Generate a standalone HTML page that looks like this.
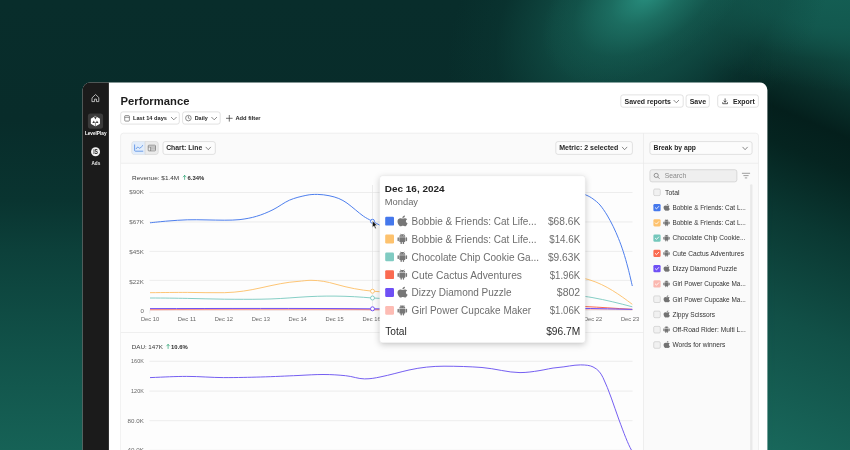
<!DOCTYPE html>
<html lang="en">
<head>
<meta charset="utf-8">
<title>Performance</title>
<style>
*{box-sizing:border-box;margin:0;padding:0}
html,body{width:850px;height:450px;overflow:hidden}
body{font-family:"Liberation Sans",sans-serif;color:#1f1f1f;position:relative;
background:#072a28;}
.a{position:absolute}
#bg{position:absolute;left:0;top:0;width:850px;height:450px;overflow:hidden}
svg text{font-family:"Liberation Sans",sans-serif;white-space:pre}
.ov{position:absolute;left:0;top:0;will-change:transform}
</style>
</head>
<body>
<div id="bg">
<div class="a" style="left:0;top:0;width:850px;height:450px;background:linear-gradient(to bottom,rgb(8,45,43) 0px,rgb(8,44,42) 120px,rgb(9,52,48) 200px,rgb(12,64,58) 250px,rgb(17,82,73) 350px,rgb(22,98,86) 450px)"></div>
<div class="a" style="left:700px;top:0;width:150px;height:450px;-webkit-mask-image:linear-gradient(to right,transparent 0%,#000 50%);mask-image:linear-gradient(to right,transparent 0%,#000 50%);background:linear-gradient(203deg,rgb(18,85,76) 0px,rgb(17,80,71) 40px,rgb(10,50,45) 88px,rgb(4,31,28) 128px,rgb(5,36,32) 160px,rgb(10,56,50) 225px,rgb(17,80,71) 320px,rgb(26,108,95) 470px)"></div>
<div class="a" style="left:600px;top:-120px;width:460px;height:210px;transform:rotate(6deg);background:radial-gradient(ellipse closest-side at 50% 50%,rgba(20,95,84,1) 0%,rgba(19,90,80,.85) 40%,rgba(14,70,62,.4) 72%,rgba(12,60,54,0) 100%)"></div>
<div class="a" style="left:430px;top:-140px;width:420px;height:300px;transform:rotate(-35deg);background:radial-gradient(ellipse closest-side at 50% 50%,rgba(20,90,80,.9) 0%,rgba(18,82,73,.7) 45%,rgba(12,62,56,.3) 75%,rgba(10,60,54,0) 100%)"></div>
<div class="a" style="left:528px;top:-76px;width:240px;height:140px;transform:rotate(-35deg);background:radial-gradient(ellipse closest-side at 50% 50%,rgba(40,142,126,1) 0%,rgba(32,120,106,.7) 35%,rgba(24,100,88,.3) 70%,rgba(20,88,78,0) 100%)"></div>
</div>
<svg class="ov" width="850" height="450" viewBox="0 0 850 450" fill="none">
<path d="M82.500 450V90.100a7.600 7.600 0 0 1 7.600-7.600H759.800a7.600 7.600 0 0 1 7.600 7.600V450z" fill="#fff"/>
<path d="M82.500 450V90.100a7.600 7.600 0 0 1 7.600-7.600H108.900V450z" fill="#1b1b1b"/>
<rect x="87.9" y="113.5" width="15.2" height="15.2" rx="2.6" fill="#3b3b3b"/>
<path d="M92.300 97.600 95.550 94.500l3.250 3.100v4h-2.300v-2.500h-1.900v2.500h-2.300z" fill="none" stroke="#e4e4e4" stroke-width="0.75" stroke-linejoin="round" stroke-linecap="round"/>
<path d="M95.40 116.65 99.34 118.92 99.34 123.48 95.40 125.75 91.46 123.48 91.46 118.92z" fill="#fff" stroke="#fff" stroke-width="1.2" stroke-linejoin="round"/>
<path d="M93.7 116.2L95.4 119.5L97.10000000000001 116.2z" fill="#3b3b3b"/>
<path d="M94.5 116.0L95.05000000000001 117.3v-1.500zM96.30000000000001 116.0L95.75 117.3v-1.500z" fill="#fff"/>
<path d="M95.4 122.0v4.400" fill="none" stroke="#3b3b3b" stroke-width="0.6"/>
<path d="M92.30000000000001 123.10000000000001l1.600-2.500 1 2.300zM98.5 123.10000000000001l-1.600-2.500-1 2.300z" fill="#3b3b3b"/>
<text x="95.7" y="135" font-size="5.3" fill="#fff" font-weight="bold" text-anchor="middle" textLength="21.6" lengthAdjust="spacingAndGlyphs">LevelPlay</text>
<circle cx="95.550" cy="151.700" r="4.500" fill="#f2f2f2"/>
<text x="95.6" y="154" font-size="6.6" fill="#1b1b1b" font-weight="bold" text-anchor="middle" textLength="4.8" lengthAdjust="spacingAndGlyphs">iS</text>
<text x="95.9" y="164.9" font-size="5.3" fill="#eee" font-weight="bold" text-anchor="middle" textLength="8.8" lengthAdjust="spacingAndGlyphs">Ads</text>
<text x="120.6" y="105" font-size="11.8" fill="#1c1c1c" font-weight="bold" textLength="68.8" lengthAdjust="spacingAndGlyphs">Performance</text>
<rect x="620.80" y="94.90" width="62.40" height="12.30" rx="2.20" fill="#fff" stroke="#cfcfcf" stroke-width="0.6"/>
<rect x="686.10" y="94.90" width="23.20" height="12.30" rx="2.20" fill="#fff" stroke="#cfcfcf" stroke-width="0.6"/>
<rect x="717.70" y="94.90" width="40.70" height="12.30" rx="2.20" fill="#fff" stroke="#cfcfcf" stroke-width="0.6"/>
<text x="624.6" y="103.6" font-size="7" fill="#262626" font-weight="bold" textLength="46.3" lengthAdjust="spacingAndGlyphs">Saved reports</text>
<path d="M673.9 100.3l2.4 2.5 2.4 -2.5" fill="none" stroke="#4a4a4a" stroke-width="0.65" stroke-linecap="round" stroke-linejoin="round"/>
<text x="689.7" y="103.6" font-size="7" fill="#262626" font-weight="bold" textLength="16.4" lengthAdjust="spacingAndGlyphs">Save</text>
<path d="M725.100 98.800v3.300M723.800 100.900l1.300 1.300 1.300-1.300M722.700 102.600v1.100h4.800v-1.100" fill="none" stroke="#2a2a2a" stroke-width="0.75" stroke-linecap="round" stroke-linejoin="round"/>
<text x="732.9" y="103.6" font-size="7" fill="#262626" font-weight="bold" textLength="21.8" lengthAdjust="spacingAndGlyphs">Export</text>
<rect x="120.70" y="111.90" width="58.60" height="12.20" rx="2.20" fill="#fff" stroke="#cfcfcf" stroke-width="0.6"/>
<rect x="182.60" y="111.90" width="37.60" height="12.20" rx="2.20" fill="#fff" stroke="#cfcfcf" stroke-width="0.6"/>
<rect x="124.700" y="115.600" width="4.700" height="5.500" rx=".8" stroke="#4a4a4a" stroke-width=".6"/>
<path d="M124.700 117.300h4.700" fill="none" stroke="#4a4a4a" stroke-width="0.6"/>
<text x="133" y="120.3" font-size="6" fill="#262626" font-weight="bold" textLength="34" lengthAdjust="spacingAndGlyphs">Last 14 days</text>
<path d="M171.3 117.3l2.5 2.5 2.5 -2.5" fill="none" stroke="#4a4a4a" stroke-width="0.65" stroke-linecap="round" stroke-linejoin="round"/>
<circle cx="188.400" cy="118.100" r="2.800" stroke="#444" stroke-width=".6"/>
<path d="M188.400 116.500v1.700l1.100.6" fill="none" stroke="#444" stroke-width="0.6" stroke-linecap="round"/>
<text x="194.7" y="120.3" font-size="6" fill="#262626" font-weight="bold" textLength="13" lengthAdjust="spacingAndGlyphs">Daily</text>
<path d="M211.7 117.3l2.5 2.5 2.5 -2.5" fill="none" stroke="#4a4a4a" stroke-width="0.65" stroke-linecap="round" stroke-linejoin="round"/>
<path d="M229.300 115.400v5.800M226.400 118.300h5.800" fill="none" stroke="#333" stroke-width="0.7" stroke-linecap="round"/>
<text x="235.4" y="120.3" font-size="6" fill="#262626" font-weight="bold" textLength="25.2" lengthAdjust="spacingAndGlyphs">Add filter</text>
<rect x="120.60" y="133.20" width="637.90" height="339.40" rx="2.70" fill="#fafafa" stroke="#e6e6e6" stroke-width="0.6"/>
<rect x="120.9" y="163.2" width="522.4" height="300" rx="0" fill="#fdfdfd"/>
<rect x="120.9" y="162.8" width="637.3" height="0.7" rx="0" fill="#e8e8e8"/>
<rect x="643.2" y="133.4" width="0.7" height="320" rx="0" fill="#e8e8e8"/>
<rect x="120.9" y="332.2" width="522.4" height="0.7" rx="0" fill="#e8e8e8"/>
<rect x="131.90" y="141.60" width="26.30" height="12.80" rx="2.20" fill="#ececec" stroke="#d0d0d0" stroke-width="0.6"/>
<path d="M145 141.600h-10.600a2.200 2.200 0 0 0-2.200 2.200v8.400a2.200 2.200 0 0 0 2.200 2.200H145z" fill="#e2edfb"/>
<path d="M145 141.600v12.800" fill="none" stroke="#d0d0d0" stroke-width="0.6"/>
<path d="M134.600 144.900v5.400a.9.9 0 0 0 .9.9h7.300" fill="none" stroke="#3b7be0" stroke-width="0.7" stroke-linecap="round" stroke-linejoin="round"/>
<path d="M136.200 148.700c.8-1.500 1.500-2 2.200-1.300s1.300 1.200 2 .5 1.400-1.600 2.300-2.400" fill="none" stroke="#3b7be0" stroke-width="0.7" stroke-linecap="round" stroke-linejoin="round"/>
<rect x="148.200" y="145.200" width="7.300" height="5.700" rx=".7" stroke="#6a6a6a" stroke-width=".65"/>
<path d="M148.200 147h7.300M150.600 147v3.900M150.600 148.950h4.900" fill="none" stroke="#6a6a6a" stroke-width="0.6"/>
<rect x="163.00" y="141.60" width="52.30" height="12.80" rx="2.20" fill="#fcfcfc" stroke="#cfcfcf" stroke-width="0.6"/>
<text x="166.2" y="150.4" font-size="7" fill="#262626" font-weight="bold" textLength="36" lengthAdjust="spacingAndGlyphs">Chart: Line</text>
<path d="M206 147.2l2.3 2.5 2.3 -2.5" fill="none" stroke="#4a4a4a" stroke-width="0.65" stroke-linecap="round" stroke-linejoin="round"/>
<rect x="555.80" y="141.60" width="76.60" height="12.80" rx="2.20" fill="#fcfcfc" stroke="#cfcfcf" stroke-width="0.6"/>
<text x="559.2" y="150.4" font-size="7" fill="#262626" font-weight="bold" textLength="59" lengthAdjust="spacingAndGlyphs">Metric: 2 selected</text>
<path d="M622.3 147.2l2.3 2.5 2.3 -2.5" fill="none" stroke="#4a4a4a" stroke-width="0.65" stroke-linecap="round" stroke-linejoin="round"/>
<rect x="649.90" y="141.60" width="102.20" height="12.80" rx="2.20" fill="#fcfcfc" stroke="#cfcfcf" stroke-width="0.6"/>
<text x="653.6" y="150.4" font-size="7" fill="#262626" font-weight="bold" textLength="42.4" lengthAdjust="spacingAndGlyphs">Break by app</text>
<path d="M742.8 147.2l2.3 2.5 2.3 -2.5" fill="none" stroke="#4a4a4a" stroke-width="0.65" stroke-linecap="round" stroke-linejoin="round"/>
<text x="132" y="179.7" font-size="6.2" fill="#3a3a3a" textLength="47.2" lengthAdjust="spacingAndGlyphs">Revenue: $1.4M</text>
<path d="M184.6 179.5v-4.100M183.2 176.9l1.400-1.500 1.400 1.500" fill="none" stroke="#1f9d6b" stroke-width="0.65" stroke-linecap="round" stroke-linejoin="round"/>
<text x="187.6" y="179.7" font-size="6.2" fill="#2a2a2a" font-weight="bold" textLength="16.7" lengthAdjust="spacingAndGlyphs">6.34%</text>
<path d="M149.500 192.5H632.5" fill="none" stroke="#e9e9e9" stroke-width="0.8"/>
<path d="M149.500 221.9H632.5" fill="none" stroke="#e9e9e9" stroke-width="0.8"/>
<path d="M149.500 251.4H632.5" fill="none" stroke="#e9e9e9" stroke-width="0.8"/>
<path d="M149.500 280.4H632.5" fill="none" stroke="#e9e9e9" stroke-width="0.8"/>
<path d="M149.500 310.2H632.5" fill="none" stroke="#e9e9e9" stroke-width="0.8"/>
<path d="M149.800 310.500v3" fill="none" stroke="#e0e0e0" stroke-width="0.6"/>
<path d="M372.5 185V311" fill="none" stroke="#e2e2e2" stroke-width="0.7"/>
<path d="M150 222.8C153.0 222.5 161.8 221.5 168 221C174.2 220.5 181.0 220.0 187.3 219.8C193.6 219.6 199.8 219.8 206 219.9C212.2 220.0 218.6 220.2 224.3 220.2C230.0 220.1 234.6 220.2 240 219.6C245.4 218.9 251.0 218.0 256.5 216.3C262.0 214.7 267.5 212.4 273 209.7C278.5 207.0 283.9 202.6 289.4 200.2C294.9 197.8 301.2 196.4 305.9 195.4C310.6 194.4 313.5 194.4 317.4 194.4C321.2 194.4 325.4 195.0 329 195.7C332.6 196.4 335.8 197.3 338.8 198.5C341.8 199.7 344.2 201.2 347 203.1C349.8 205.0 352.5 207.5 355.3 209.7C358.1 211.9 360.7 214.4 363.6 216.3C366.5 218.2 368.1 219.0 372.5 221.3C376.9 223.6 383.9 227.6 390 230C396.1 232.4 402.7 236.0 409.4 236C416.1 236.0 423.9 233.0 430 230C436.1 227.0 440.5 221.8 446.3 218C452.1 214.2 458.9 209.5 465 207C471.1 204.5 476.9 203.2 483.2 203C489.5 202.8 496.9 205.3 503 205.5C509.1 205.7 513.8 205.8 520 204C526.2 202.2 533.3 197.4 540 195C546.7 192.6 554.3 190.3 560 189.5C565.7 188.7 569.7 189.4 574 190.3C578.3 191.2 582.8 193.6 586 195C589.2 196.4 590.7 197.2 593 198.9C595.3 200.6 597.7 202.3 600 205C602.3 207.7 604.8 211.4 607 215C609.2 218.6 611.4 222.8 613.3 226.7C615.2 230.6 616.8 234.3 618.5 238.5C620.2 242.7 621.7 246.8 623.3 251.7C624.9 256.6 626.5 262.3 628 268C629.5 273.7 631.6 283.0 632.3 286" fill="none" stroke="#4578ec" stroke-width="0.95"/>
<path d="M150 292.700C165 292.500 175 292.400 187.300 292.400C200 292.400 212 293 224.300 292.700C238 292.300 249 290.500 261 287.800C275 284.700 286 282.200 298 281.400C303 281 307 280.300 311 280.300C320 280.300 328 282 335 284C349 288 360 290 372.500 291.200C400 293.500 430 293 460 291C500 288 530 276 560 276C572 276.500 582 277.500 590 280C606 285 620 295 632.300 304.300" fill="none" stroke="#fdc26e" stroke-width="0.95"/>
<path d="M150 298C165 298 175 298.200 187.300 298.400C200 298.600 212 299.100 224.300 299.200C238 299.300 249 299.400 261 299.200C275 299 286 298.200 298 297.300C312 296.300 323 296 335 296.100C349 296.200 360 297 372.500 298C420 301 500 295 560 294.500C575 295 583 296 592 297.500C606 300 620 303.500 632.300 306.800" fill="none" stroke="#80cbc2" stroke-width="0.95"/>
<path d="M150 309.600C220 309.400 300 308.800 372.500 309.600C440 309.400 520 306.500 560 306C575 306.200 580 306.400 586 306.600C600 307.200 615 308.400 632.300 309.300" fill="none" stroke="#fb6b51" stroke-width="1"/>
<path d="M150 309.900C220 309.800 300 309.600 372.500 309.900C440 309.800 520 309.500 560 309.600C590 309.500 610 309.600 632.300 309.700" fill="none" stroke="#fbb8b0" stroke-width="0.8"/>
<path d="M150 308.600C220 308.500 300 308.200 372.500 308.800C440 309 520 309 560 308.200C590 308.300 610 308.900 632.300 309.400" fill="none" stroke="#6f50f5" stroke-width="1"/>
<circle cx="372.500" cy="221.3" r="2" fill="#fff" stroke="#4578ec" stroke-width=".95"/>
<circle cx="372.500" cy="291.2" r="2" fill="#fff" stroke="#fdc26e" stroke-width=".95"/>
<circle cx="372.500" cy="298" r="2" fill="#fff" stroke="#80cbc2" stroke-width=".95"/>
<circle cx="372.500" cy="308.8" r="2" fill="#fff" stroke="#6f50f5" stroke-width=".95"/>
<text x="143.9" y="193.7" font-size="6.1" fill="#666" text-anchor="end" textLength="14.6" lengthAdjust="spacingAndGlyphs">$90K</text>
<text x="143.9" y="223.7" font-size="6.1" fill="#666" text-anchor="end" textLength="14.6" lengthAdjust="spacingAndGlyphs">$67K</text>
<text x="143.9" y="253.5" font-size="6.1" fill="#666" text-anchor="end" textLength="14.6" lengthAdjust="spacingAndGlyphs">$45K</text>
<text x="143.9" y="283.5" font-size="6.1" fill="#666" text-anchor="end" textLength="14.6" lengthAdjust="spacingAndGlyphs">$22K</text>
<text x="143.9" y="313.4" font-size="6.1" fill="#666" text-anchor="end">0</text>
<text x="150.0" y="320.9" font-size="5.9" fill="#666" text-anchor="middle" textLength="18.2" lengthAdjust="spacingAndGlyphs">Dec 10</text>
<text x="186.9" y="320.9" font-size="5.9" fill="#666" text-anchor="middle" textLength="18.2" lengthAdjust="spacingAndGlyphs">Dec 11</text>
<text x="223.8" y="320.9" font-size="5.9" fill="#666" text-anchor="middle" textLength="18.2" lengthAdjust="spacingAndGlyphs">Dec 12</text>
<text x="260.8" y="320.9" font-size="5.9" fill="#666" text-anchor="middle" textLength="18.2" lengthAdjust="spacingAndGlyphs">Dec 13</text>
<text x="297.7" y="320.9" font-size="5.9" fill="#666" text-anchor="middle" textLength="18.2" lengthAdjust="spacingAndGlyphs">Dec 14</text>
<text x="334.6" y="320.9" font-size="5.9" fill="#666" text-anchor="middle" textLength="18.2" lengthAdjust="spacingAndGlyphs">Dec 15</text>
<text x="371.5" y="320.9" font-size="5.9" fill="#666" text-anchor="middle" textLength="18.2" lengthAdjust="spacingAndGlyphs">Dec 16</text>
<text x="408.4" y="320.9" font-size="5.9" fill="#666" text-anchor="middle" textLength="18.2" lengthAdjust="spacingAndGlyphs">Dec 17</text>
<text x="445.4" y="320.9" font-size="5.9" fill="#666" text-anchor="middle" textLength="18.2" lengthAdjust="spacingAndGlyphs">Dec 18</text>
<text x="482.3" y="320.9" font-size="5.9" fill="#666" text-anchor="middle" textLength="18.2" lengthAdjust="spacingAndGlyphs">Dec 19</text>
<text x="519.2" y="320.9" font-size="5.9" fill="#666" text-anchor="middle" textLength="18.2" lengthAdjust="spacingAndGlyphs">Dec 20</text>
<text x="556.1" y="320.9" font-size="5.9" fill="#666" text-anchor="middle" textLength="18.2" lengthAdjust="spacingAndGlyphs">Dec 21</text>
<text x="593.0" y="320.9" font-size="5.9" fill="#666" text-anchor="middle" textLength="18.2" lengthAdjust="spacingAndGlyphs">Dec 22</text>
<text x="630.0" y="320.9" font-size="5.9" fill="#666" text-anchor="middle" textLength="18.2" lengthAdjust="spacingAndGlyphs">Dec 23</text>
<text x="131.7" y="348.7" font-size="6.2" fill="#3a3a3a" textLength="31.3" lengthAdjust="spacingAndGlyphs">DAU: 147K</text>
<path d="M168.1 348.5v-4.100M166.7 345.9l1.400-1.500 1.400 1.500" fill="none" stroke="#1f9d6b" stroke-width="0.65" stroke-linecap="round" stroke-linejoin="round"/>
<text x="171.1" y="348.7" font-size="6.2" fill="#2a2a2a" font-weight="bold" textLength="16.7" lengthAdjust="spacingAndGlyphs">10.6%</text>
<path d="M149.500 361.3H632.5" fill="none" stroke="#e9e9e9" stroke-width="0.8"/>
<path d="M149.500 391.1H632.5" fill="none" stroke="#e9e9e9" stroke-width="0.8"/>
<path d="M149.500 420.7H632.5" fill="none" stroke="#e9e9e9" stroke-width="0.8"/>
<path d="M149.500 450.3H632.5" fill="none" stroke="#e9e9e9" stroke-width="0.8"/>
<path d="M150 377.600C165 377 175 376.400 186.700 376.400C200 376.400 212 377.600 223.600 377.600C238 377.600 249 377.300 260.400 377C275 376.600 286 376 298 375.500C308 375 315 374.500 323 374.500C332 374.500 338 375 345.500 375.700C353 376.400 358 378.900 364.600 378.900C371 378.900 375 378 380 377C390 375 400 372 409 370C421 367.400 432 366.200 444 366.200C457 366.200 470 366.600 482 367.500C495 368.500 508 372.600 520 372.600C527 372.600 533 371.600 539 370.700C546 369.600 551 368 558 367.500C566 366.900 573 364.900 580.600 364.900C586 364.900 590 365.400 593 366.900C598 369.400 600.500 372.500 603 377.600C609 390 614 406 618.700 419C624 433.500 628 444 631.400 450" fill="none" stroke="#6e56f0" stroke-width="0.95"/>
<text x="143.8" y="363.40000000000003" font-size="5.9" fill="#666" text-anchor="end" textLength="12.7" lengthAdjust="spacingAndGlyphs">160K</text>
<text x="143.8" y="393.20000000000005" font-size="5.9" fill="#666" text-anchor="end" textLength="12.7" lengthAdjust="spacingAndGlyphs">120K</text>
<text x="143.8" y="422.8" font-size="5.9" fill="#666" text-anchor="end" textLength="16.2" lengthAdjust="spacingAndGlyphs">80.0K</text>
<text x="143.8" y="452.40000000000003" font-size="5.9" fill="#666" text-anchor="end" textLength="16.2" lengthAdjust="spacingAndGlyphs">40.0K</text>
<rect x="649.90" y="169.70" width="87.00" height="12.20" rx="2.20" fill="#efefef" stroke="#c6c6c6" stroke-width="0.6"/>
<rect x="750.1" y="184.3" width="2.4" height="270" rx="1.2" fill="#e9e9e9"/>
<circle cx="656.200" cy="175.400" r="2.100" stroke="#666" stroke-width=".65"/>
<path d="M657.800 177l1.500 1.500" fill="none" stroke="#666" stroke-width="0.65" stroke-linecap="round"/>
<text x="664.8" y="178.2" font-size="6.8" fill="#8a8a8a" textLength="21.5" lengthAdjust="spacingAndGlyphs">Search</text>
<path d="M742.300 173.300h7.400M743.800 175.600h4.400M745.200 177.900h1.600" fill="none" stroke="#777" stroke-width="0.7" stroke-linecap="round"/>
<rect x="653.700" y="189.0" width="6.600" height="6.600" rx="1.200" fill="#f1f1f1" stroke="#c4c4c4" stroke-width=".6"/>
<text x="665" y="194.60000000000002" font-size="6.8" fill="#333" textLength="14.5" lengthAdjust="spacingAndGlyphs">Total</text>
<rect x="653.400" y="204.0" width="7.200" height="7.200" rx="1.300" fill="#4578ec"/>
<path d="M655.300 207.7l1.200 1.200 2.200-2.400" fill="none" stroke="#fff" stroke-width="0.85" stroke-linecap="round" stroke-linejoin="round"/>
<path d="M11.2 8.5c0-1.7 1.4-2.5 1.5-2.6-.8-1.2-2.1-1.3-2.5-1.4-1.1-.1-2.1.6-2.6.6s-1.4-.6-2.3-.6c-1.200 0-2.300.7-2.900 1.800-1.200 2.100-.3 5.300.9 7 .6.800 1.300 1.800 2.200 1.700.9 0 1.200-.6 2.300-.6s1.400.6 2.300.5c1 0 1.600-.8 2.100-1.700.7-1 .9-1.900 1-2-.1 0-1.900-.7-2-2.700zM9.500 3.300c.5-.6.800-1.400.7-2.300-.7 0-1.600.5-2.100 1.100-.5.500-.900 1.400-.8 2.200.8.100 1.700-.4 2.200-1z" fill="#737373" transform="translate(662.55 203.15) scale(0.5631 0.5035)"/>
<text x="672.4" y="209.9" font-size="6.8" fill="#333" textLength="73.4" lengthAdjust="spacingAndGlyphs">Bobbie &amp; Friends: Cat L...</text>
<rect x="653.400" y="219.2" width="7.200" height="7.200" rx="1.300" fill="#fdc26e"/>
<path d="M655.300 222.9l1.200 1.200 2.200-2.400" fill="none" stroke="#fff" stroke-width="0.85" stroke-linecap="round" stroke-linejoin="round"/>
<path d="M3.800 5.800h8.400v6.400c0 .5-.4.900-.9.900h-.7v2c0 .6-.5 1-1 1s-1-.4-1-1v-2H7.400v2c0 .6-.5 1-1 1s-1-.4-1-1v-2h-.7c-.5 0-.9-.4-.9-.9zM2.200 5.700c.6 0 1 .4 1 1v4c0 .6-.4 1-1 1s-1-.4-1-1v-4c0-.6.400-1 1-1zm11.600 0c.6 0 1 .4 1 1v4c0 .6-.4 1-1 1s-1-.4-1-1v-4c0-.6.400-1 1-1zM10.400 1.600l.8-1.200c.1-.1 0-.2-.1-.3-.1 0-.2 0-.3.100l-.8 1.200C9.400 1.200 8.700 1 8 1s-1.400.2-2 .4L5.200.2C5.100.1 5 .1 4.900.1c-.100.100-.200.200-.100.300l.8 1.200C4.500 2.300 3.800 3.600 3.800 5h8.400c0-1.400-.7-2.700-1.800-3.400zM6.200 3.700c-.3 0-.500-.2-.500-.5s.2-.5.500-.5.500.2.500.5-.2.500-.5.500zm3.600 0c-.3 0-.500-.2-.500-.5s.2-.5.500-.5.500.2.500.5-.2.500-.5.500z" fill="#737373" transform="translate(662.74 219.26) scale(0.4706 0.4277)"/>
<text x="672.4" y="225.10000000000002" font-size="6.8" fill="#333" textLength="73.4" lengthAdjust="spacingAndGlyphs">Bobbie &amp; Friends: Cat L...</text>
<rect x="653.400" y="234.5" width="7.200" height="7.200" rx="1.300" fill="#74c7bb"/>
<path d="M655.300 238.2l1.200 1.200 2.200-2.400" fill="none" stroke="#fff" stroke-width="0.85" stroke-linecap="round" stroke-linejoin="round"/>
<path d="M3.800 5.800h8.400v6.400c0 .5-.4.900-.9.900h-.7v2c0 .6-.5 1-1 1s-1-.4-1-1v-2H7.400v2c0 .6-.5 1-1 1s-1-.4-1-1v-2h-.7c-.5 0-.9-.4-.9-.9zM2.200 5.700c.6 0 1 .4 1 1v4c0 .6-.4 1-1 1s-1-.4-1-1v-4c0-.6.400-1 1-1zm11.600 0c.6 0 1 .4 1 1v4c0 .6-.4 1-1 1s-1-.4-1-1v-4c0-.6.400-1 1-1zM10.400 1.600l.8-1.200c.1-.1 0-.2-.1-.3-.1 0-.2 0-.3.100l-.8 1.200C9.400 1.200 8.700 1 8 1s-1.400.2-2 .4L5.200.2C5.100.1 5 .1 4.900.1c-.100.100-.200.200-.100.300l.8 1.200C4.500 2.300 3.800 3.600 3.800 5h8.400c0-1.400-.7-2.700-1.800-3.400zM6.200 3.700c-.3 0-.500-.2-.500-.5s.2-.5.500-.5.500.2.500.5-.2.500-.5.500zm3.600 0c-.3 0-.500-.2-.500-.5s.2-.5.500-.5.500.2.500.5-.2.500-.5.500z" fill="#737373" transform="translate(662.74 234.56) scale(0.4706 0.4277)"/>
<text x="672.4" y="240.4" font-size="6.8" fill="#333" textLength="73" lengthAdjust="spacingAndGlyphs">Chocolate Chip Cookie...</text>
<rect x="653.400" y="249.8" width="7.200" height="7.200" rx="1.300" fill="#fb6b51"/>
<path d="M655.300 253.5l1.200 1.200 2.200-2.400" fill="none" stroke="#fff" stroke-width="0.85" stroke-linecap="round" stroke-linejoin="round"/>
<path d="M3.800 5.800h8.400v6.400c0 .5-.4.900-.9.900h-.7v2c0 .6-.5 1-1 1s-1-.4-1-1v-2H7.400v2c0 .6-.5 1-1 1s-1-.4-1-1v-2h-.7c-.5 0-.9-.4-.9-.9zM2.200 5.700c.6 0 1 .4 1 1v4c0 .6-.4 1-1 1s-1-.4-1-1v-4c0-.6.400-1 1-1zm11.600 0c.6 0 1 .4 1 1v4c0 .6-.4 1-1 1s-1-.4-1-1v-4c0-.6.400-1 1-1zM10.400 1.600l.8-1.200c.1-.1 0-.2-.1-.3-.1 0-.2 0-.3.100l-.8 1.200C9.400 1.200 8.700 1 8 1s-1.400.2-2 .4L5.200.2C5.100.1 5 .1 4.900.1c-.100.100-.200.200-.100.300l.8 1.200C4.500 2.300 3.800 3.600 3.800 5h8.400c0-1.400-.7-2.700-1.800-3.400zM6.200 3.700c-.3 0-.500-.2-.500-.5s.2-.5.500-.5.500.2.500.5-.2.500-.5.500zm3.600 0c-.3 0-.500-.2-.500-.5s.2-.5.500-.5.500.2.500.5-.2.500-.5.500z" fill="#737373" transform="translate(662.74 249.86) scale(0.4706 0.4277)"/>
<text x="672.4" y="255.70000000000002" font-size="6.8" fill="#333" textLength="71.6" lengthAdjust="spacingAndGlyphs">Cute Cactus Adventures</text>
<rect x="653.400" y="265.0" width="7.200" height="7.200" rx="1.300" fill="#6f50f5"/>
<path d="M655.300 268.7l1.200 1.200 2.200-2.400" fill="none" stroke="#fff" stroke-width="0.85" stroke-linecap="round" stroke-linejoin="round"/>
<path d="M11.2 8.5c0-1.7 1.4-2.5 1.5-2.6-.8-1.2-2.1-1.3-2.5-1.4-1.1-.1-2.1.6-2.6.6s-1.4-.6-2.3-.6c-1.200 0-2.300.7-2.900 1.800-1.200 2.100-.3 5.300.9 7 .6.800 1.300 1.800 2.200 1.700.9 0 1.200-.6 2.300-.6s1.400.6 2.300.5c1 0 1.600-.8 2.100-1.700.7-1 .9-1.900 1-2-.1 0-1.900-.7-2-2.700zM9.500 3.300c.5-.6.800-1.400.7-2.300-.7 0-1.600.5-2.100 1.100-.5.500-.900 1.400-.8 2.200.8.100 1.700-.4 2.200-1z" fill="#737373" transform="translate(662.55 264.15) scale(0.5631 0.5035)"/>
<text x="672.4" y="270.90000000000003" font-size="6.8" fill="#333" textLength="64.6" lengthAdjust="spacingAndGlyphs">Dizzy Diamond Puzzle</text>
<rect x="653.400" y="280.3" width="7.200" height="7.200" rx="1.300" fill="#fbb8b0"/>
<path d="M655.300 284.0l1.200 1.200 2.200-2.400" fill="none" stroke="#fff" stroke-width="0.85" stroke-linecap="round" stroke-linejoin="round"/>
<path d="M3.800 5.800h8.400v6.400c0 .5-.4.900-.9.900h-.7v2c0 .6-.5 1-1 1s-1-.4-1-1v-2H7.400v2c0 .6-.5 1-1 1s-1-.4-1-1v-2h-.7c-.5 0-.9-.4-.9-.9zM2.200 5.700c.6 0 1 .4 1 1v4c0 .6-.4 1-1 1s-1-.4-1-1v-4c0-.6.400-1 1-1zm11.600 0c.6 0 1 .4 1 1v4c0 .6-.4 1-1 1s-1-.4-1-1v-4c0-.6.400-1 1-1zM10.400 1.600l.8-1.200c.1-.1 0-.2-.1-.3-.1 0-.2 0-.3.100l-.8 1.200C9.400 1.200 8.700 1 8 1s-1.400.2-2 .4L5.200.2C5.100.1 5 .1 4.900.1c-.100.100-.200.200-.100.300l.8 1.200C4.500 2.300 3.800 3.600 3.800 5h8.400c0-1.400-.7-2.700-1.800-3.400zM6.200 3.700c-.3 0-.500-.2-.500-.5s.2-.5.500-.5.500.2.500.5-.2.500-.5.500zm3.600 0c-.3 0-.500-.2-.500-.5s.2-.5.500-.5.500.2.500.5-.2.500-.5.500z" fill="#737373" transform="translate(662.74 280.36) scale(0.4706 0.4277)"/>
<text x="672.4" y="286.2" font-size="6.8" fill="#333" textLength="73.4" lengthAdjust="spacingAndGlyphs">Girl Power Cupcake Ma...</text>
<rect x="653.700" y="295.9" width="6.600" height="6.600" rx="1.200" fill="#f1f1f1" stroke="#c4c4c4" stroke-width=".6"/>
<path d="M11.2 8.5c0-1.7 1.4-2.5 1.5-2.6-.8-1.2-2.1-1.3-2.5-1.4-1.1-.1-2.1.6-2.6.6s-1.4-.6-2.3-.6c-1.200 0-2.300.7-2.900 1.800-1.200 2.100-.3 5.300.9 7 .6.800 1.300 1.800 2.200 1.700.9 0 1.200-.6 2.300-.6s1.400.6 2.300.5c1 0 1.600-.8 2.100-1.700.7-1 .9-1.900 1-2-.1 0-1.900-.7-2-2.700zM9.500 3.300c.5-.6.800-1.400.7-2.300-.7 0-1.600.5-2.100 1.100-.5.500-.900 1.400-.8 2.200.8.100 1.700-.4 2.200-1z" fill="#737373" transform="translate(662.55 294.75) scale(0.5631 0.5035)"/>
<text x="672.4" y="301.5" font-size="6.8" fill="#333" textLength="73.4" lengthAdjust="spacingAndGlyphs">Girl Power Cupcake Ma...</text>
<rect x="653.700" y="311.1" width="6.600" height="6.600" rx="1.200" fill="#f1f1f1" stroke="#c4c4c4" stroke-width=".6"/>
<path d="M11.2 8.5c0-1.7 1.4-2.5 1.5-2.6-.8-1.2-2.1-1.3-2.5-1.4-1.1-.1-2.1.6-2.6.6s-1.4-.6-2.3-.6c-1.200 0-2.300.7-2.900 1.800-1.200 2.100-.3 5.300.9 7 .6.800 1.300 1.800 2.200 1.700.9 0 1.200-.6 2.300-.6s1.400.6 2.300.5c1 0 1.600-.8 2.100-1.700.7-1 .9-1.900 1-2-.1 0-1.900-.7-2-2.700zM9.500 3.300c.5-.6.800-1.400.7-2.300-.7 0-1.600.5-2.100 1.100-.5.500-.900 1.400-.8 2.200.8.100 1.700-.4 2.200-1z" fill="#737373" transform="translate(662.55 309.95) scale(0.5631 0.5035)"/>
<text x="672.4" y="316.7" font-size="6.8" fill="#333" textLength="42.7" lengthAdjust="spacingAndGlyphs">Zippy Scissors</text>
<rect x="653.700" y="326.4" width="6.600" height="6.600" rx="1.200" fill="#f1f1f1" stroke="#c4c4c4" stroke-width=".6"/>
<path d="M3.800 5.800h8.400v6.400c0 .5-.4.900-.9.900h-.7v2c0 .6-.5 1-1 1s-1-.4-1-1v-2H7.400v2c0 .6-.5 1-1 1s-1-.4-1-1v-2h-.7c-.5 0-.9-.4-.9-.9zM2.200 5.700c.6 0 1 .4 1 1v4c0 .6-.4 1-1 1s-1-.4-1-1v-4c0-.6.400-1 1-1zm11.600 0c.6 0 1 .4 1 1v4c0 .6-.4 1-1 1s-1-.4-1-1v-4c0-.6.400-1 1-1zM10.400 1.600l.8-1.200c.1-.1 0-.2-.1-.3-.1 0-.2 0-.3.100l-.8 1.200C9.400 1.200 8.700 1 8 1s-1.400.2-2 .4L5.200.2C5.100.1 5 .1 4.900.1c-.100.100-.200.200-.100.300l.8 1.200C4.500 2.300 3.800 3.600 3.800 5h8.400c0-1.400-.7-2.700-1.800-3.400zM6.200 3.700c-.3 0-.500-.2-.500-.5s.2-.5.500-.5.500.2.500.5-.2.500-.5.500zm3.600 0c-.3 0-.500-.2-.500-.5s.2-.5.500-.5.500.2.500.5-.2.500-.5.500z" fill="#737373" transform="translate(662.74 326.16) scale(0.4706 0.4277)"/>
<text x="672.4" y="332.0" font-size="6.8" fill="#333" textLength="73.4" lengthAdjust="spacingAndGlyphs">Off-Road Rider: Multi L...</text>
<rect x="653.700" y="341.7" width="6.600" height="6.600" rx="1.200" fill="#f1f1f1" stroke="#c4c4c4" stroke-width=".6"/>
<path d="M11.2 8.5c0-1.7 1.4-2.5 1.5-2.6-.8-1.2-2.1-1.3-2.5-1.4-1.1-.1-2.1.6-2.6.6s-1.4-.6-2.3-.6c-1.200 0-2.300.7-2.900 1.800-1.200 2.100-.3 5.300.9 7 .6.800 1.300 1.800 2.200 1.700.9 0 1.200-.6 2.300-.6s1.400.6 2.300.5c1 0 1.600-.8 2.100-1.700.7-1 .9-1.900 1-2-.1 0-1.900-.7-2-2.700zM9.500 3.300c.5-.6.800-1.400.7-2.300-.7 0-1.600.5-2.100 1.100-.5.500-.900 1.400-.8 2.200.8.100 1.700-.4 2.200-1z" fill="#737373" transform="translate(662.55 340.55) scale(0.5631 0.5035)"/>
<text x="672.4" y="347.3" font-size="6.8" fill="#333" textLength="53" lengthAdjust="spacingAndGlyphs">Words for winners</text>
<defs><filter id="sh" x="-10%" y="-10%" width="120%" height="130%"><feDropShadow dx="0" dy="1.800" stdDeviation="3" flood-color="#000" flood-opacity=".21"/></filter></defs>
<rect x="379.600" y="175.700" width="205.700" height="167.100" rx="3" fill="#fff" stroke="rgba(0,0,0,.10)" stroke-width=".5" filter="url(#sh)"/>
<text x="384.8" y="191.5" font-size="9.7" fill="#262626" font-weight="bold" textLength="59.8" lengthAdjust="spacingAndGlyphs">Dec 16, 2024</text>
<text x="384.8" y="204.9" font-size="8.8" fill="#6a6a6a" textLength="33.2" lengthAdjust="spacingAndGlyphs">Monday</text>
<rect x="385.200" y="216.8" width="8.800" height="8.800" rx="1.200" fill="#4578ec"/>
<path d="M11.2 8.5c0-1.7 1.4-2.5 1.5-2.6-.8-1.2-2.1-1.3-2.5-1.4-1.1-.1-2.1.6-2.6.6s-1.4-.6-2.3-.6c-1.200 0-2.300.7-2.900 1.800-1.200 2.100-.3 5.300.9 7 .6.800 1.300 1.800 2.200 1.700.9 0 1.200-.6 2.300-.6s1.400.6 2.300.5c1 0 1.600-.8 2.100-1.700.7-1 .9-1.900 1-2-.1 0-1.900-.7-2-2.700zM9.500 3.300c.5-.6.800-1.400.7-2.300-.7 0-1.600.5-2.100 1.100-.5.500-.900 1.400-.8 2.200.8.100 1.700-.4 2.200-1z" fill="#777" transform="translate(395.86 214.68) scale(0.8932 0.7730)"/>
<text x="411.6" y="225.1" font-size="10.3" fill="#6e6e6e" textLength="125" lengthAdjust="spacingAndGlyphs">Bobbie &amp; Friends: Cat Life...</text>
<text x="580.2" y="225.1" font-size="10.3" fill="#6e6e6e" text-anchor="end" textLength="32.3" lengthAdjust="spacingAndGlyphs">$68.6K</text>
<rect x="385.200" y="234.6" width="8.800" height="8.800" rx="1.200" fill="#fdc26e"/>
<path d="M3.800 5.800h8.400v6.400c0 .5-.4.900-.9.900h-.7v2c0 .6-.5 1-1 1s-1-.4-1-1v-2H7.400v2c0 .6-.5 1-1 1s-1-.4-1-1v-2h-.7c-.5 0-.9-.4-.9-.9zM2.200 5.700c.6 0 1 .4 1 1v4c0 .6-.4 1-1 1s-1-.4-1-1v-4c0-.6.400-1 1-1zm11.600 0c.6 0 1 .4 1 1v4c0 .6-.4 1-1 1s-1-.4-1-1v-4c0-.6.400-1 1-1zM10.400 1.600l.8-1.200c.1-.1 0-.2-.1-.3-.1 0-.2 0-.3.100l-.8 1.200C9.400 1.200 8.700 1 8 1s-1.400.2-2 .4L5.200.2C5.100.1 5 .1 4.900.1c-.100.100-.200.200-.100.300l.8 1.200C4.500 2.300 3.800 3.600 3.800 5h8.400c0-1.400-.7-2.700-1.800-3.400zM6.200 3.700c-.3 0-.500-.2-.500-.5s.2-.5.500-.5.500.2.500.5-.2.500-.5.500zm3.600 0c-.3 0-.500-.2-.500-.5s.2-.5.500-.5.500.2.500.5-.2.500-.5.500z" fill="#777" transform="translate(396.65 233.53) scale(0.7059 0.6541)"/>
<text x="411.6" y="242.9" font-size="10.3" fill="#6e6e6e" textLength="125" lengthAdjust="spacingAndGlyphs">Bobbie &amp; Friends: Cat Life...</text>
<text x="580.2" y="242.9" font-size="10.3" fill="#6e6e6e" text-anchor="end" textLength="31" lengthAdjust="spacingAndGlyphs">$14.6K</text>
<rect x="385.200" y="252.5" width="8.800" height="8.800" rx="1.200" fill="#80cbc2"/>
<path d="M3.800 5.800h8.400v6.400c0 .5-.4.900-.9.900h-.7v2c0 .6-.5 1-1 1s-1-.4-1-1v-2H7.400v2c0 .6-.5 1-1 1s-1-.4-1-1v-2h-.7c-.5 0-.9-.4-.9-.9zM2.200 5.700c.6 0 1 .4 1 1v4c0 .6-.4 1-1 1s-1-.4-1-1v-4c0-.6.400-1 1-1zm11.600 0c.6 0 1 .4 1 1v4c0 .6-.4 1-1 1s-1-.4-1-1v-4c0-.6.400-1 1-1zM10.400 1.600l.8-1.200c.1-.1 0-.2-.1-.3-.1 0-.2 0-.3.100l-.8 1.200C9.400 1.200 8.700 1 8 1s-1.400.2-2 .4L5.200.2C5.100.1 5 .1 4.900.1c-.100.100-.200.200-.100.300l.8 1.200C4.500 2.300 3.800 3.600 3.800 5h8.400c0-1.400-.7-2.700-1.800-3.400zM6.200 3.700c-.3 0-.500-.2-.500-.5s.2-.5.500-.5.500.2.500.5-.2.500-.5.500zm3.600 0c-.3 0-.500-.2-.500-.5s.2-.5.500-.5.500.2.500.5-.2.500-.5.500z" fill="#777" transform="translate(396.65 251.43) scale(0.7059 0.6541)"/>
<text x="411.6" y="260.79999999999995" font-size="10.3" fill="#6e6e6e" textLength="127.5" lengthAdjust="spacingAndGlyphs">Chocolate Chip Cookie Ga...</text>
<text x="580.2" y="260.79999999999995" font-size="10.3" fill="#6e6e6e" text-anchor="end" textLength="32.3" lengthAdjust="spacingAndGlyphs">$9.63K</text>
<rect x="385.200" y="270.3" width="8.800" height="8.800" rx="1.200" fill="#fb6b51"/>
<path d="M3.800 5.800h8.400v6.400c0 .5-.4.900-.9.900h-.7v2c0 .6-.5 1-1 1s-1-.4-1-1v-2H7.400v2c0 .6-.5 1-1 1s-1-.4-1-1v-2h-.7c-.5 0-.9-.4-.9-.9zM2.200 5.700c.6 0 1 .4 1 1v4c0 .6-.4 1-1 1s-1-.4-1-1v-4c0-.6.400-1 1-1zm11.600 0c.6 0 1 .4 1 1v4c0 .6-.4 1-1 1s-1-.4-1-1v-4c0-.6.400-1 1-1zM10.400 1.600l.8-1.200c.1-.1 0-.2-.1-.3-.1 0-.2 0-.3.100l-.8 1.200C9.400 1.200 8.700 1 8 1s-1.400.2-2 .4L5.200.2C5.100.1 5 .1 4.900.1c-.100.100-.200.200-.100.300l.8 1.200C4.500 2.300 3.800 3.600 3.800 5h8.400c0-1.400-.7-2.700-1.800-3.400zM6.200 3.700c-.3 0-.500-.2-.500-.5s.2-.5.500-.5.500.2.500.5-.2.500-.5.500zm3.600 0c-.3 0-.500-.2-.500-.5s.2-.5.500-.5.500.2.500.5-.2.500-.5.500z" fill="#777" transform="translate(396.65 269.23) scale(0.7059 0.6541)"/>
<text x="411.6" y="278.59999999999997" font-size="10.3" fill="#6e6e6e" textLength="110.4" lengthAdjust="spacingAndGlyphs">Cute Cactus Adventures</text>
<text x="580.2" y="278.59999999999997" font-size="10.3" fill="#6e6e6e" text-anchor="end" textLength="30.5" lengthAdjust="spacingAndGlyphs">$1.96K</text>
<rect x="385.200" y="288.1" width="8.800" height="8.800" rx="1.200" fill="#6f50f5"/>
<path d="M11.2 8.5c0-1.7 1.4-2.5 1.5-2.6-.8-1.2-2.1-1.3-2.5-1.4-1.1-.1-2.1.6-2.6.6s-1.4-.6-2.3-.6c-1.200 0-2.300.7-2.900 1.800-1.200 2.100-.3 5.300.9 7 .6.800 1.300 1.800 2.200 1.700.9 0 1.200-.6 2.300-.6s1.400.6 2.300.5c1 0 1.600-.8 2.100-1.700.7-1 .9-1.900 1-2-.1 0-1.900-.7-2-2.700zM9.500 3.300c.5-.6.800-1.400.7-2.300-.7 0-1.600.5-2.100 1.100-.5.500-.900 1.400-.8 2.200.8.100 1.700-.4 2.200-1z" fill="#777" transform="translate(395.86 285.98) scale(0.8932 0.7730)"/>
<text x="411.6" y="296.4" font-size="10.3" fill="#6e6e6e" textLength="100" lengthAdjust="spacingAndGlyphs">Dizzy Diamond Puzzle</text>
<text x="580.2" y="296.4" font-size="10.3" fill="#6e6e6e" text-anchor="end" textLength="23.4" lengthAdjust="spacingAndGlyphs">$802</text>
<rect x="385.200" y="306.0" width="8.800" height="8.800" rx="1.200" fill="#fdbcb4"/>
<path d="M3.800 5.800h8.400v6.400c0 .5-.4.900-.9.900h-.7v2c0 .6-.5 1-1 1s-1-.4-1-1v-2H7.400v2c0 .6-.5 1-1 1s-1-.4-1-1v-2h-.7c-.5 0-.9-.4-.9-.9zM2.200 5.700c.6 0 1 .4 1 1v4c0 .6-.4 1-1 1s-1-.4-1-1v-4c0-.6.400-1 1-1zm11.600 0c.6 0 1 .4 1 1v4c0 .6-.4 1-1 1s-1-.4-1-1v-4c0-.6.400-1 1-1zM10.400 1.600l.8-1.200c.1-.1 0-.2-.1-.3-.1 0-.2 0-.3.100l-.8 1.200C9.400 1.200 8.700 1 8 1s-1.400.2-2 .4L5.200.2C5.100.1 5 .1 4.900.1c-.100.100-.200.200-.100.300l.8 1.200C4.500 2.300 3.800 3.600 3.800 5h8.400c0-1.400-.7-2.700-1.800-3.400zM6.200 3.700c-.3 0-.500-.2-.500-.5s.2-.5.500-.5.500.2.500.5-.2.500-.5.500zm3.600 0c-.3 0-.500-.2-.500-.5s.2-.5.500-.5.500.2.500.5-.2.500-.5.500z" fill="#777" transform="translate(396.65 304.93) scale(0.7059 0.6541)"/>
<text x="411.6" y="314.29999999999995" font-size="10.3" fill="#6e6e6e" textLength="119.6" lengthAdjust="spacingAndGlyphs">Girl Power Cupcake Maker</text>
<text x="580.2" y="314.29999999999995" font-size="10.3" fill="#6e6e6e" text-anchor="end" textLength="30.5" lengthAdjust="spacingAndGlyphs">$1.06K</text>
<text x="385.2" y="334.6" font-size="10.2" fill="#2a2a2a" textLength="21.6" lengthAdjust="spacingAndGlyphs">Total</text>
<text x="580.2" y="334.6" font-size="10.2" fill="#2a2a2a" text-anchor="end" textLength="34" lengthAdjust="spacingAndGlyphs">$96.7M</text>
<path d="M372.400 220.800v6.600l1.600-1.400 1.150 2.650 1.100-.5-1.150-2.550h2.150z" fill="#111" stroke="#fff" stroke-width="0.5"/>
</svg>
</body>
</html>
